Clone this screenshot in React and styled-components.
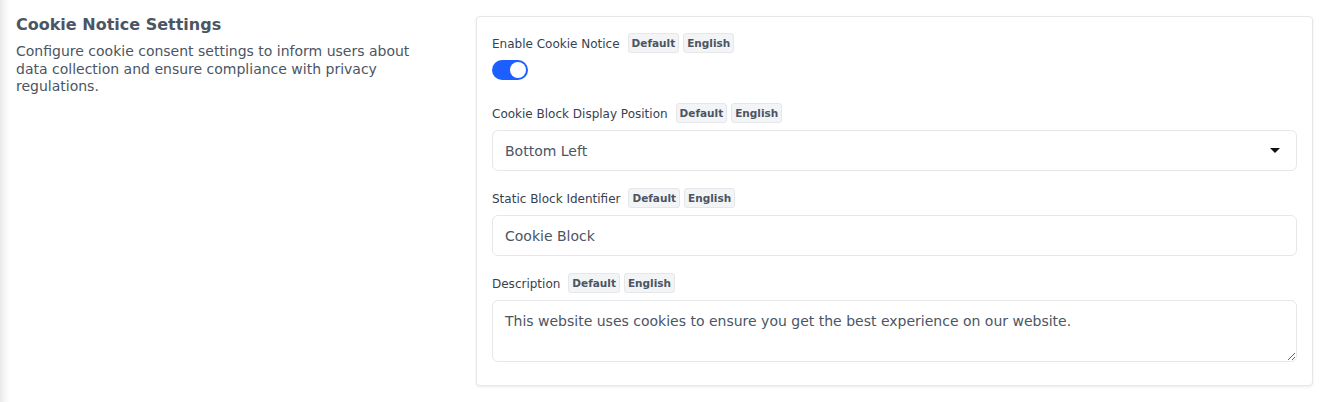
import styled, { createGlobalStyle } from "styled-components"

const GlobalStyle = createGlobalStyle`
  * { box-sizing: border-box; }
  body {
    margin: 0;
    font-family: "DejaVu Sans", sans-serif;
    background: linear-gradient(to right, #e9e9e9 0, #f7f7f7 5px, #ffffff 10px);
  }
`

const Page = styled.div`
  display: grid;
  grid-template-columns: 428px 1fr;
  gap: 32px;
  padding: 15px 17px 16px 16px;
  align-items: start;
`

const Intro = styled.div`
  display: flex;
  flex-direction: column;
  gap: 8px;
`

const Title = styled.h2`
  margin: 0;
  font-size: 16px;
  font-weight: 700;
  line-height: 20px;
  color: #4b5563;
`

const Lead = styled.p`
  margin: 0;
  font-size: 14px;
  line-height: 17.5px;
  color: #4b5563;
  max-width: 410px;
`

const Card = styled.div`
  margin-top: 1px;
  display: flex;
  flex-direction: column;
  gap: 17px;
  padding: 16px 15px 23px;
  background: #fff;
  border: 1px solid #e5e7eb;
  border-radius: 4px;
  box-shadow: 0 1px 3px rgba(0, 0, 0, 0.08);
`

const Field = styled.div`
  display: flex;
  flex-direction: column;
  gap: 7px;
  margin-bottom: ${({ $extra }) => $extra || 0}px;
`

const LabelRow = styled.div`
  display: flex;
  align-items: center;
  height: 20px;
`

const Label = styled.label`
  font-size: 12px;
  color: #374151;
  margin-right: 8px;
  padding-top: 1px;
`

const Badge = styled.span`
  display: inline-flex;
  align-items: center;
  height: 20px;
  padding: 0 3px;
  margin-right: 4px;
  font-size: 10.5px;
  font-weight: 700;
  color: #4b5563;
  background: #f3f4f6;
  border: 1px solid #e5e7eb;
  border-radius: 3px;
`

const Toggle = styled.span`
  position: relative;
  display: block;
  width: 36px;
  height: 20px;
  border-radius: 10px;
  background: ${({ $on }) => ($on ? "#1d5efe" : "#d1d5db")};

  &::after {
    content: "";
    position: absolute;
    top: 2px;
    left: ${({ $on }) => ($on ? "18px" : "2px")};
    width: 16px;
    height: 16px;
    border-radius: 50%;
    background: #fff;
  }
`

const Control = styled.div`
  display: flex;
  align-items: center;
  justify-content: space-between;
  height: 41px;
  padding: 0 16px 0 12px;
  border: 1px solid #e5e7eb;
  border-radius: 6px;
  font-size: 14px;
  color: #4b5563;
`

const Caret = styled.span`
  width: 0;
  height: 0;
  border-left: 5px solid transparent;
  border-right: 5px solid transparent;
  border-top: 5px solid #111;
`

const TextArea = styled.textarea`
  display: block;
  width: 100%;
  height: 62px;
  padding: 11px 12px;
  border: 1px solid #e5e7eb;
  border-radius: 6px;
  font-family: "DejaVu Sans", sans-serif;
  font-size: 14px;
  line-height: 18px;
  color: #4b5563;
  resize: vertical;
  outline: none;
`

function Badges() {
  return (
    <>
      <Badge>Default</Badge>
      <Badge>English</Badge>
    </>
  )
}

export default function App() {
  return (
    <>
      <GlobalStyle />
      <Page>
        <Intro>
          <Title>Cookie Notice Settings</Title>
          <Lead>
            Configure cookie consent settings to inform users about data
            collection and ensure compliance with privacy regulations.
          </Lead>
        </Intro>
        <Card>
          <Field $extra={6}>
            <LabelRow>
              <Label>Enable Cookie Notice</Label>
              <Badges />
            </LabelRow>
            <Toggle $on />
          </Field>
          <Field>
            <LabelRow>
              <Label>Cookie Block Display Position</Label>
              <Badges />
            </LabelRow>
            <Control>
              Bottom Left
              <Caret />
            </Control>
          </Field>
          <Field>
            <LabelRow>
              <Label>Static Block Identifier</Label>
              <Badges />
            </LabelRow>
            <Control>Cookie Block</Control>
          </Field>
          <Field>
            <LabelRow>
              <Label>Description</Label>
              <Badges />
            </LabelRow>
            <TextArea
              readOnly
              defaultValue="This website uses cookies to ensure you get the best experience on our website."
            />
          </Field>
        </Card>
      </Page>
    </>
  )
}
